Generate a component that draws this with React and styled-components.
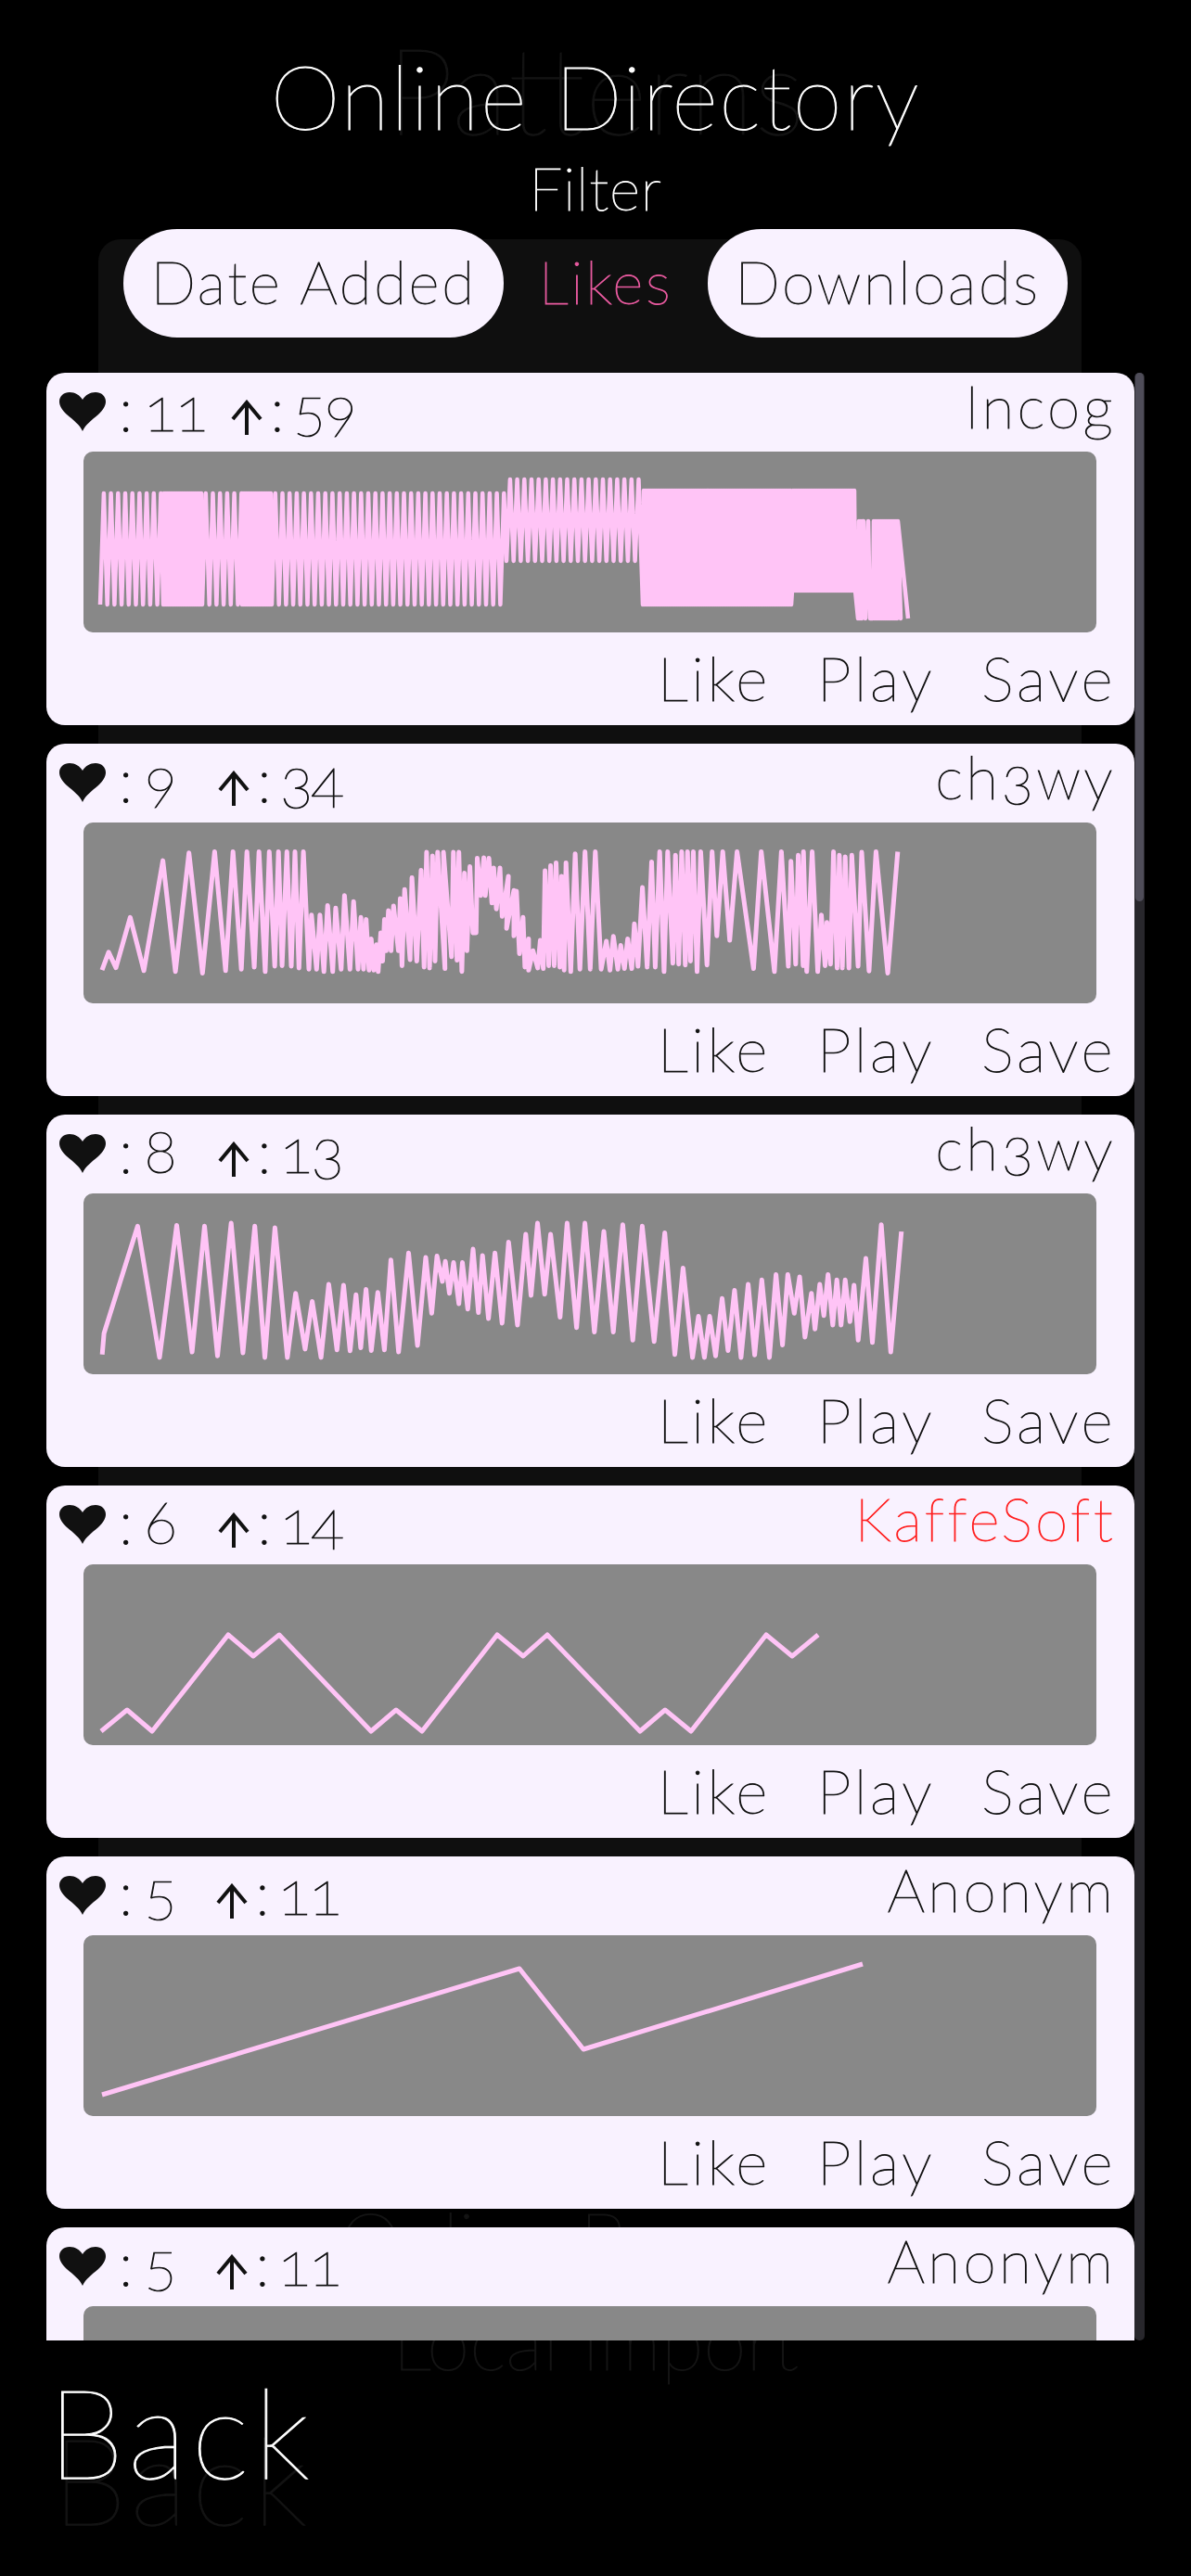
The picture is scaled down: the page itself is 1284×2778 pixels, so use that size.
import React from "react";
import styled, { createGlobalStyle } from "styled-components";

const GlobalStyle = createGlobalStyle`
  html, body {
    margin: 0;
    background: #000;
  }
  body {
    font-family: "Lato", "Liberation Sans", sans-serif;
    font-weight: 100;
    font-variant-numeric: oldstyle-nums;
    -webkit-text-stroke: 1px currentColor;
  }
`;

const Screen = styled.div`
  position: relative;
  width: 1284px;
  height: 2778px;
  overflow: hidden;
  background: #000;
`;

// the previous screen, still showing faintly under this one
const Ghost = styled.div`
  position: absolute;
  inset: 0;
  color: #141414;
  display: flex;
  flex-direction: column;
  align-items: center;
`;

const GhostTitle = styled.div`
  font-size: 130px;
  line-height: 130px;
  margin-top: 30px;
`;

const GhostPanel = styled.div`
  flex: none;
  width: 1060px;
  height: 2040px;
  margin: 98px 12px 0 0;
  background: #0f0f0f;
  border-radius: 24px;
`;

const GhostLabel = styled.div`
  font-size: 84px;
  line-height: 110px;
  margin-top: ${(p) => p.$top}px;
`;

const GhostBack = styled.div`
  position: absolute;
  left: 56px;
  top: 2605px;
  font-size: 130px;
  line-height: 136px;
  letter-spacing: 5px;
`;

const Page = styled.div`
  position: relative;
  display: flex;
  flex-direction: column;
  align-items: center;
`;

const Title = styled.h1`
  margin: 47px 0 0;
  font-size: 96px;
  line-height: 112px;
  font-weight: 100;
  color: #fff;
  letter-spacing: 1.6px;
`;

const FilterLabel = styled.div`
  margin-top: 12px;
  font-size: 64px;
  line-height: 64px;
  color: #fff;
  letter-spacing: 0.8px;
`;

const FilterRow = styled.div`
  display: flex;
  align-items: center;
  margin-top: 12px;
  width: 1018px;
  height: 117px;
`;

const FilterButton = styled.div`
  height: 117px;
  box-sizing: border-box;
  width: ${(p) => p.$width}px;
  border-radius: 58px;
  display: flex;
  align-items: center;
  justify-content: center;
  font-size: 64px;
  letter-spacing: 2.6px;
  padding-bottom: 4px;
  color: ${(p) => (p.$active ? "#e85a9f" : "#111")};
  background: ${(p) => (p.$active ? "transparent" : "#f9f2ff")};
`;

const ListArea = styled.div`
  display: flex;
  align-self: flex-start;
  margin: 38px 0 0 50px;
  height: 2122px;
`;

const List = styled.div`
  width: 1173px;
  height: 100%;
  overflow: hidden;
  display: flex;
  flex-direction: column;
  gap: 20px;
`;

const Track = styled.div`
  width: 11px;
  height: 100%;
  border-radius: 5px;
  background: #28272c;
`;

const Thumb = styled.div`
  height: 570px;
  margin: 0 1px;
  border-radius: 5px;
  background: #4f4d59;
`;

const Card = styled.div`
  flex: none;
  box-sizing: border-box;
  height: 380px;
  padding: 0 20px 0 0;
  border-radius: 20px;
  background: #f9f2ff;
  color: #111;
  display: flex;
  flex-direction: column;
`;

const CardHead = styled.div`
  display: flex;
  align-items: flex-start;
  justify-content: space-between;
  height: 85px;
`;

const Stats = styled.div`
  display: flex;
  align-items: flex-start;
  padding-left: 14px;
`;

const Heart = styled.svg`
  width: 50px;
  height: 42px;
  margin-top: 21px;
  flex: none;
`;

const Arrow = styled.svg`
  width: 34px;
  height: 38px;
  margin-top: 29px;
  margin-left: 42px;
  flex: none;
`;

const Count = styled.span`
  flex: none;
  font-size: 66px;
  line-height: 80px;
  margin-top: -2px;
  margin-left: ${(p) => p.$left}px;
  letter-spacing: -2px;
  width: ${(p) => (p.$width ? `${p.$width}px` : "auto")};
  white-space: nowrap;
`;

const Author = styled.div`
  font-size: 64px;
  line-height: 64px;
  letter-spacing: 3.3px;
  padding-top: 4px;
  color: ${(p) => (p.$red ? "#ff1f1f" : "#111")};
`;

const WavePanel = styled.div`
  height: 195px;
  width: 1092px;
  margin-left: 40px;
  flex: none;
  background: #888;
  border-radius: 10px;
  overflow: hidden;
`;

const WaveSvg = styled.svg`
  display: block;
  width: 1092px;
  height: 195px;
`;

const Actions = styled.div`
  display: flex;
  justify-content: flex-end;
  gap: 50px;
  padding-top: 12px;
`;

const Action = styled.div`
  font-size: 66px;
  line-height: 74px;
  letter-spacing: 3.5px;
`;

const BackLabel = styled.div`
  position: absolute;
  left: 51px;
  top: 2555px;
  font-size: 134px;
  line-height: 134px;
  letter-spacing: 5px;
  color: #fff;
`;

// helpers: turn the pixel readings of a trace into panel coordinates
// readings are of the outer tips, so pull them in a little for the line width
const PANEL_X = 90;
const PANEL_Y = 87;
const fromTrace = (points, offsetX, scaleX) =>
  points.map(([x, y]) => [offsetX + x / scaleX - PANEL_X, 100 + (y / 3 - PANEL_Y - 100) * 0.965]);

const zigzag = (x0, x1, pitch, hi, lo) => {
  const pts = [];
  let up = false;
  for (let x = x0; x <= x1; x += pitch / 2) {
    pts.push([x, up ? hi : lo]);
    up = !up;
  }
  return pts;
};

const waveOne = [
  ...zigzag(18, 86, 7.7, 45, 165),
  ...zigzag(86, 128, 2, 45, 165),
  ...zigzag(128, 171, 7.7, 45, 165),
  ...zigzag(171, 203, 2, 45, 165),
  ...zigzag(203, 454, 7.7, 45, 165),
  ...zigzag(456, 602, 7.7, 30, 118),
  ...zigzag(603, 763, 2, 42, 165),
  ...zigzag(764, 832, 2, 42, 150),
  ...zigzag(835, 840, 2, 75, 180),
  [841, 75],
  [843, 180],
  [846, 75],
  [848, 180],
  ...zigzag(851, 878, 2, 75, 180),
  [881, 180],
  [878, 75],
  [889, 180],
];

const waveTwoLeft = fromTrace(
  [
    [177, 745], [195, 685], [215, 737], [254, 568], [291, 747], [343, 378], [377, 750], [414, 352],
    [451, 755], [484, 348], [514, 747], [534, 348], [557, 742], [572, 348], [592, 735], [605, 348],
    [622, 750], [633, 348], [648, 732], [658, 348], [668, 730], [681, 348], [693, 732], [703, 348],
    [714, 738], [726, 348], [741, 742], [748, 560], [762, 742], [771, 560], [782, 750], [792, 528],
    [806, 750], [814, 537], [829, 742], [838, 495], [853, 742], [863, 515], [875, 742], [883, 568],
    [890, 742], [897, 575], [905, 745], [911, 640], [918, 745], [925, 660], [930, 750], [937, 620],
    [942, 715], [947, 575], [952, 680], [958, 545], [965, 680], [972, 530], [985, 680], [990, 505],
    [995, 730], [1002, 475], [1017, 710], [1022, 435], [1035, 715], [1047, 410], [1055, 735], [1062, 350],
    [1070, 738], [1078, 362], [1085, 715], [1092, 350], [1112, 740], [1108, 350], [1130, 700], [1135, 350],
    [1145, 712], [1150, 350], [1158, 750], [1165, 420], [1172, 680], [1180, 398], [1188, 620], [1197, 620],
    [1200, 370], [1210, 495], [1218, 368], [1222, 495], [1232, 370], [1240, 520], [1245, 402], [1252, 540],
    [1262, 402], [1268, 565], [1285, 430], [1280, 605], [1300, 478], [1300, 630], [1307, 480], [1315, 690],
    [1325, 568], [1330, 735], [1340, 640], [1340, 745], [1352, 680], [1365, 738], [1372, 645], [1380, 740],
    [1385, 412], [1395, 730], [1400, 395], [1410, 730], [1415, 385], [1425, 735], [1430, 430], [1437, 745],
    [1442, 385], [1455, 750], [1467, 355], [1480, 742], [1494, 348], [1508, 742], [1522, 348], [1538, 742],
    [1552, 648], [1562, 745],
  ],
  40,
  2.529
);

const waveTwoRight = fromTrace(
  [
    [408, 632], [420, 742], [428, 662], [438, 740], [447, 640], [458, 740], [465, 590], [475, 732],
    [487, 468], [500, 735], [512, 382], [522, 735], [534, 348], [546, 750], [556, 348], [570, 722],
    [577, 360], [586, 725], [594, 348], [604, 728], [610, 348], [618, 715], [626, 348], [636, 750],
    [646, 348], [663, 728], [677, 348], [690, 630], [706, 348], [725, 645], [745, 348], [790, 740],
    [811, 348], [847, 750], [866, 348], [885, 732], [892, 380], [905, 725], [912, 360], [925, 730],
    [926, 348], [935, 750], [950, 348], [965, 750], [975, 560], [985, 730], [990, 585], [1000, 725],
    [1008, 348], [1018, 738], [1024, 360], [1032, 738], [1040, 365], [1050, 738], [1058, 360], [1075, 732],
    [1085, 350], [1105, 748], [1124, 348], [1156, 755], [1183, 348],
  ],
  500,
  2.529
);

const waveThree = fromTrace(
  [
    [110, 790], [113, 720], [170, 360], [207, 800], [236, 357], [262, 782], [283, 360], [305, 795],
    [328, 350], [348, 785], [368, 360], [385, 800], [402, 365], [423, 800], [437, 585], [453, 772],
    [465, 612], [480, 800], [493, 555], [507, 775], [518, 558], [529, 778], [539, 590], [547, 768],
    [556, 572], [565, 777], [576, 582], [587, 775], [598, 473], [611, 782], [628, 450], [643, 760],
    [657, 465], [667, 652], [676, 460], [685, 545], [690, 478], [697, 585], [704, 482], [713, 620],
    [719, 482], [728, 638], [737, 437], [746, 650], [753, 458], [763, 670], [774, 450], [786, 685],
    [797, 413], [812, 692], [826, 387], [835, 592], [846, 350], [858, 588], [868, 387], [884, 665],
    [896, 350], [912, 700], [926, 350], [942, 715], [958, 378], [974, 715], [990, 355], [1007, 742],
    [1023, 360], [1043, 747], [1061, 382], [1078, 790], [1092, 500], [1108, 800], [1118, 662], [1128, 800],
    [1137, 662], [1147, 795], [1158, 602], [1168, 777], [1179, 575], [1190, 800], [1202, 555], [1213, 792],
    [1225, 540], [1238, 800], [1249, 522], [1260, 758], [1269, 522], [1280, 652], [1289, 530], [1298, 732],
    [1309, 585], [1315, 705], [1323, 555], [1330, 660], [1337, 522], [1345, 692], [1352, 540], [1359, 692],
    [1366, 540], [1374, 680], [1381, 558], [1388, 742], [1401, 468], [1412, 750], [1427, 355], [1443, 782],
    [1461, 378],
  ],
  40,
  1.568
);

const waveFour = [
  [19, 180], [47, 157], [74, 180], [156, 76], [183, 99], [211, 76], [310, 180], [337, 157], [365, 180],
  [446, 76], [474, 99], [500, 76], [600, 180], [627, 157], [655, 180], [736, 76], [764, 99], [792, 76],
];

const waveFive = [[20, 172], [470, 36], [539, 123], [840, 31]];
const waveSix = waveFive.map(([x, y]) => [x, y + 10]);

const patterns = [
  { likes: 11, ups: 59, likesWidth: 52, author: "Incog", wave: waveOne, width: 4.5 },
  { likes: 9, ups: 34, likesWidth: 38, author: "ch3wy", wave: [...waveTwoLeft, ...waveTwoRight], width: 5 },
  { likes: 8, ups: 13, likesWidth: 38, author: "ch3wy", wave: waveThree, width: 5 },
  { likes: 6, ups: 14, likesWidth: 38, author: "KaffeSoft", red: true, wave: waveFour, width: 5 },
  { likes: 5, ups: 11, likesWidth: 36, author: "Anonym", wave: waveFive, width: 5 },
  { likes: 5, ups: 11, likesWidth: 36, author: "Anonym", wave: waveSix, width: 5 },
];

const Wave = ({ points, width }) => (
  <WavePanel>
    <WaveSvg viewBox="0 0 1092 195">
      <polyline
        points={points.map(([x, y]) => `${x.toFixed(1)},${y.toFixed(1)}`).join(" ")}
        fill="none"
        stroke="#ffc4f6"
        strokeWidth={width}
        strokeLinejoin="round"
      />
    </WaveSvg>
  </WavePanel>
);

const PatternCard = ({ pattern }) => (
  <Card>
    <CardHead>
      <Stats>
        <Heart viewBox="0 0 50 42">
          <path
            d="M25 42C22 35 15 30 8 24C3 19 0 15 0 10C0 4 5 0 11 0C17 0 22 3 25 8C28 3 33 0 39 0C45 0 50 4 50 10C50 15 47 19 42 24C35 30 28 35 25 42Z"
            fill="#111"
          />
        </Heart>
        <Count $left={14}>:</Count>
        <Count $left={14} $width={pattern.likesWidth}>{pattern.likes}</Count>
        <Arrow viewBox="0 0 34 38">
          <path d="M17 38V3M2 21L17 3L32 21" fill="none" stroke="#111" strokeWidth="4" />
        </Arrow>
        <Count $left={8}>:</Count>
        <Count $left={11}>{pattern.ups}</Count>
      </Stats>
      <Author $red={pattern.red}>{pattern.author}</Author>
    </CardHead>
    <Wave points={pattern.wave} width={pattern.width} />
    <Actions>
      <Action>Like</Action>
      <Action>Play</Action>
      <Action>Save</Action>
    </Actions>
  </Card>
);

const App = () => (
  <>
    <GlobalStyle />
    <Screen>
      <Ghost>
        <GhostTitle>Patterns</GhostTitle>
        <GhostPanel />
        <GhostLabel $top={62}>Online Browser</GhostLabel>
        <GhostLabel $top={-1}>Local Import</GhostLabel>
        <GhostBack>Back</GhostBack>
      </Ghost>
      <Page>
        <Title>Online Directory</Title>
        <FilterLabel>Filter</FilterLabel>
        <FilterRow>
          <FilterButton $width={410}>Date Added</FilterButton>
          <FilterButton $width={220} $active>Likes</FilterButton>
          <FilterButton $width={388}>Downloads</FilterButton>
        </FilterRow>
        <ListArea>
          <List>
            {patterns.map((pattern, i) => (
              <PatternCard key={i} pattern={pattern} />
            ))}
          </List>
          <Track>
            <Thumb />
          </Track>
        </ListArea>
      </Page>
      <BackLabel>Back</BackLabel>
    </Screen>
  </>
);

export default App;
